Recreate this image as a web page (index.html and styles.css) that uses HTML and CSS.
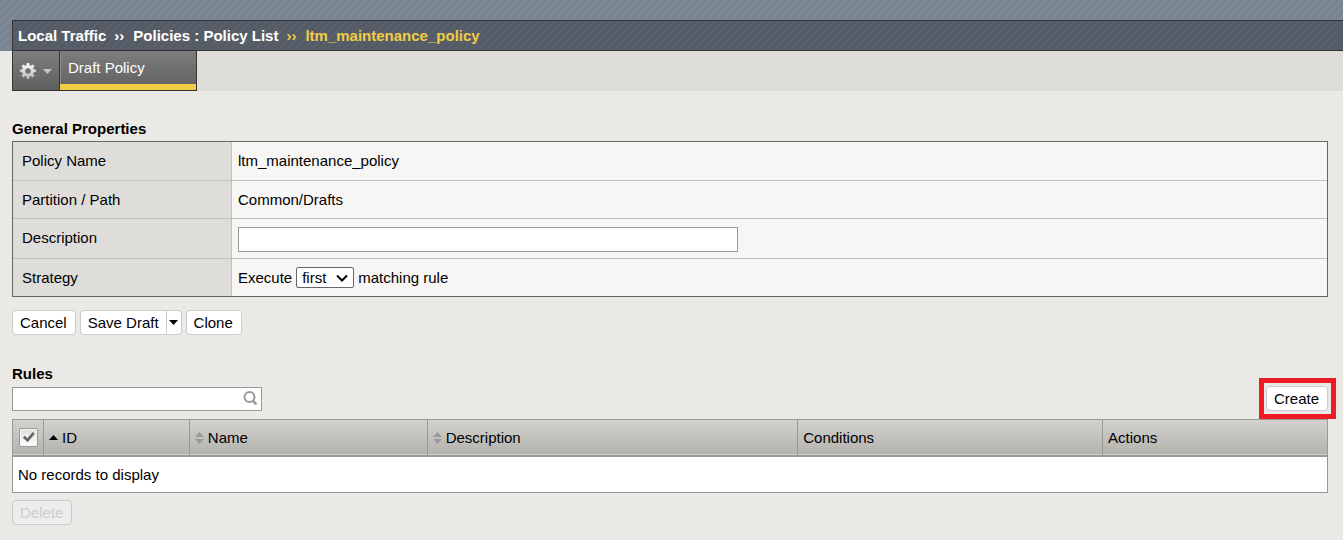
FILE: index.html
```html
<!DOCTYPE html>
<html lang="en">
<head>
<meta charset="utf-8">
<title>Policy List - ltm_maintenance_policy</title>
<link rel="stylesheet" href="styles.css">
</head>
<body>
<header class="banner">
  <nav class="breadcrumb" aria-label="Breadcrumb">
    <span>Local Traffic</span>
    <span class="sep">››</span>
    <span>Policies : Policy List</span>
    <span class="sep current">››</span>
    <span class="current">ltm_maintenance_policy</span>
  </nav>
</header>
<div class="tabs">
  <button class="tab tab-gear" type="button" aria-label="Options">
    <svg width="16" height="16" viewBox="0 0 16 16" aria-hidden="true">
      <defs><linearGradient id="gear" x1="0" y1="0" x2="0" y2="1"><stop offset="0" stop-color="#fff"/><stop offset="1" stop-color="#b5b5b5"/></linearGradient></defs>
      <g fill="url(#gear)">
        <path fill-rule="evenodd" d="M6.8 0h2.4l.4 2.3 1.2.5 1.9-1.4 1.8 1.8-1.4 1.9.5 1.2 2.3.4v2.4l-2.3.4-.5 1.2 1.4 1.9-1.8 1.8-1.9-1.4-1.2.5-.4 2.5H6.8l-.4-2.5-1.2-.5-1.9 1.4-1.8-1.8 1.4-1.9-.5-1.2L.1 9.100V6.700l2.300-.400.500-1.200L1.500 3.200l1.800-1.800 1.900 1.400 1.200-.500zM8 5.200a2.700 2.700 0 1 0 0 5.400 2.700 2.700 0 0 0 0-5.400z"/>
      </g>
    </svg>
    <svg width="9" height="7" viewBox="0 0 9 7" aria-hidden="true"><path d="M0 2h9L4.500 7z" fill="#c4c4c4"/></svg>
  </button>
  <a class="tab tab-active" href="#draft">Draft Policy</a>
</div>
<main class="page">
  <h2 class="heading">General Properties</h2>
  <table class="props">
    <tr class="row-name"><th scope="row">Policy Name</th><td>ltm_maintenance_policy</td></tr>
    <tr class="row-path"><th scope="row">Partition / Path</th><td>Common/Drafts</td></tr>
    <tr class="row-desc"><th scope="row"><label for="description">Description</label></th><td><input class="text-field description" id="description" type="text"></td></tr>
    <tr class="row-strategy"><th scope="row"><label for="strategy">Strategy</label></th><td><div class="strategy">Execute <span class="select-wrap"><select class="select" id="strategy"><option>first</option><option>best</option><option>all</option></select><svg class="chevron" width="12" height="8" viewBox="0 0 12 8" aria-hidden="true"><path d="M1 1.500l5 5 5-5" fill="none" stroke="#000" stroke-width="2"/></svg></span> matching rule</div></td></tr>
  </table>
  <div class="actions">
    <button class="btn" type="button">Cancel</button>
    <div class="split">
      <button class="btn split-main" type="button">Save Draft</button>
      <button class="btn split-more" type="button" aria-label="More save options"><svg width="9" height="5" viewBox="0 0 9 5" aria-hidden="true"><path d="M0 0h9L4.500 5z" fill="#000"/></svg></button>
    </div>
    <button class="btn" type="button">Clone</button>
  </div>
  <h2 class="heading">Rules</h2>
  <div class="toolbar">
    <div class="search">
      <input class="text-field search-field" type="text" aria-label="Search rules">
      <svg class="search-icon" width="15" height="15" viewBox="0 0 15 15" fill="none" stroke="#9a9a9a" aria-hidden="true"><circle cx="6.500" cy="6" r="5" stroke-width="2"/><path d="M9.500 9.500l4 3.800" stroke-width="2.500"/></svg>
    </div>
    <div class="create"><button class="btn" type="button">Create</button></div>
  </div>
  <table class="rules">
    <thead>
      <tr>
        <th class="col-check" scope="col"><label class="check"><input class="check-box" type="checkbox" checked aria-label="Select all"><svg class="check-mark" width="14" height="14" viewBox="0 0 14 14" aria-hidden="true"><path d="M.800 7.800L3 5.800l2.300 2.400L10.800 2l2 1.700L5.800 12.300z" fill="#666"/></svg></label></th>
        <th class="col-id" scope="col"><span class="sort"><svg width="9" height="5" viewBox="0 0 9 5" aria-hidden="true"><path d="M0 5h9L4.500 0z" fill="#000"/></svg>ID</span></th>
        <th class="col-name" scope="col"><span class="sort"><svg width="9" height="12" viewBox="0 0 9 12" aria-hidden="true"><path d="M0 5h9L4.500 0zM0 7h9L4.500 12z" fill="#999"/></svg>Name</span></th>
        <th class="col-desc" scope="col"><span class="sort"><svg width="9" height="12" viewBox="0 0 9 12" aria-hidden="true"><path d="M0 5h9L4.500 0zM0 7h9L4.500 12z" fill="#999"/></svg>Description</span></th>
        <th class="col-cond" scope="col">Conditions</th>
        <th scope="col">Actions</th>
      </tr>
    </thead>
    <tbody>
      <tr><td colspan="6">No records to display</td></tr>
    </tbody>
  </table>
  <button class="btn" type="button" disabled>Delete</button>
</main>
</body>
</html>
```

FILE: styles.css
```css
* {
  box-sizing: border-box;
}

body {
  margin: 0;
  background: #eae9e5;
  color: #000;
  font: 15px/18px "Liberation Sans", Arial, sans-serif;
}

button,
input,
select {
  margin: 0;
  font: inherit;
  color: inherit;
}

svg {
  display: block;
  flex: none;
}

.banner {
  padding: 20px 0 0 12px;
  background: linear-gradient(135deg, #7a8491 25%, #7d8997 25% 50%, #7a8491 50% 75%, #7d8997 75%) 0 0 / 8px 8px;
}

.breadcrumb {
  display: flex;
  align-items: center;
  gap: 8px;
  height: 31px;
  padding-left: 5px;
  border: 1px solid #333;
  border-right: 0;
  background: linear-gradient(135deg, #555b66 25%, #595f69 25% 50%, #555b66 50% 75%, #595f69 75%) 0 0 / 8px 8px;
  color: #fff;
  font-weight: bold;
}

.sep {
  padding-right: 1px;
}

.breadcrumb .current {
  color: #f0cd45;
}

.tabs {
  display: flex;
  height: 40px;
  margin-left: 12px;
  background: #deddd9;
}

.tab {
  border: 1px solid #333;
  border-top: 0;
  background: linear-gradient(#7d7d7d, #606060);
  color: #fff;
}

.tab-gear {
  display: flex;
  align-items: center;
  gap: 7px;
  width: 48px;
  padding: 0 7px;
}

.tab-active {
  width: 137px;
  padding: 8px 8px 0;
  border-left: 0;
  box-shadow: inset 0 -6px #f0cd45, inset 1px 0 #8c8c8c;
  text-decoration: none;
}

.page {
  padding: 29px 15px 15px 12px;
}

.heading {
  margin: 0;
  padding-bottom: 3px;
  font-size: 15px;
  line-height: 18px;
}

.props {
  width: 100%;
  border: 1px solid #666;
  border-spacing: 0;
  background: #f7f6f4;
}

.props th,
.props td {
  padding: 0 6px;
  border-bottom: 1px solid #c0c0c0;
  text-align: left;
}

.props th {
  width: 219px;
  padding-left: 9px;
  border-right: 1px solid #c0c0c0;
  background: #deddd9;
  font-weight: normal;
}

.row-name {
  height: 39px;
}

.row-path {
  height: 38px;
}

.row-desc {
  height: 40px;
}

.props .row-desc th {
  padding-bottom: 2px;
}

.props .row-desc td {
  padding-top: 2px;
}

.row-strategy {
  height: 37px;
}

.props .row-strategy th,
.props .row-strategy td {
  border-bottom: 0;
}

.text-field {
  display: block;
  height: 25px;
  padding: 0 4px;
  border: 1px solid #999;
  border-radius: 0;
  background: #fff;
}

.description {
  width: 500px;
  max-width: 100%;
}

.strategy {
  display: flex;
  align-items: center;
  gap: 4px;
}

.select-wrap {
  position: relative;
}

.select {
  display: block;
  width: 58px;
  height: 21px;
  padding: 0 5px;
  border: 1px solid #666;
  border-radius: 2px;
  background: #fff;
  appearance: none;
}

.chevron {
  position: absolute;
  top: 7px;
  right: 6px;
  pointer-events: none;
}

.actions {
  display: flex;
  gap: 4px;
  padding: 13px 0 30px;
}

.btn {
  height: 25px;
  padding: 0 8px 0 7px;
  border: 1px solid #ccc;
  border-radius: 4px;
  background: #fff;
  white-space: nowrap;
}

.btn:disabled {
  background: #ededed;
  color: #ccc;
}

.split {
  display: flex;
}

.split-main {
  padding-right: 7px;
  border-right: 0;
  border-radius: 4px 0 0 4px;
}

.split-more {
  padding: 0 3px 0 2px;
  border-radius: 0 4px 4px 0;
}

.toolbar {
  display: flex;
  align-items: center;
  justify-content: space-between;
  padding-bottom: 8px;
}

.search {
  position: relative;
  width: 250px;
}

.search-field {
  width: 100%;
  height: 24px;
  padding-right: 24px;
}

.search-icon {
  position: absolute;
  top: 4px;
  right: 4px;
}

.create {
  display: flex;
  position: relative;
}

.create::after {
  content: "";
  position: absolute;
  inset: -8px -8px -8px -7px;
  border: 5px solid #ee1c25;
  pointer-events: none;
}

.rules {
  width: 100%;
  margin-bottom: 7px;
  table-layout: fixed;
  border: 1px solid #999;
  border-spacing: 0;
  background: #fff;
}

.rules th {
  height: 37px;
  padding: 0 5px;
  border-right: 1px solid #999;
  border-bottom: 2px solid #999;
  background: linear-gradient(#d2d1cd, #b3b2ad);
  box-shadow: inset 0 -1px #d0cfcb;
  font-weight: normal;
  text-align: left;
}

.rules th:last-child {
  border-right: 0;
}

.rules td {
  height: 35px;
  padding: 0 5px;
}

.rules .col-check {
  width: 31px;
  padding: 0 6px;
}

.col-id {
  width: 11.1%;
}

.col-name {
  width: 18.1%;
}

.col-desc {
  width: 28.2%;
}

.col-cond {
  width: 23.2%;
}

.sort {
  display: flex;
  align-items: center;
  gap: 4px;
}

.check {
  display: block;
  position: relative;
  width: 19px;
}

.check-box {
  display: block;
  width: 19px;
  height: 19px;
  border: 1px solid #999;
  border-radius: 2px;
  background: linear-gradient(#ddd, #fff);
  box-shadow: inset 0 0 0 1px #f5f5f5;
  appearance: none;
}

.check-mark {
  position: absolute;
  top: 2px;
  left: 3px;
  visibility: hidden;
}

.check-box:checked + .check-mark {
  visibility: visible;
}
```
